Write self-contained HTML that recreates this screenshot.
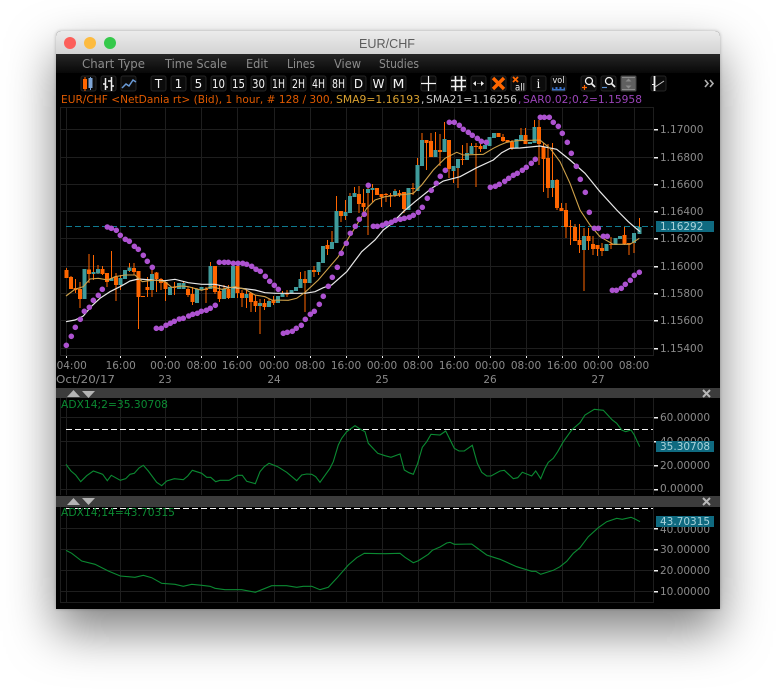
<!DOCTYPE html>
<html><head><meta charset="utf-8"><title>EUR/CHF</title>
<style>
html,body{margin:0;padding:0;background:#fff;width:776px;height:689px;overflow:hidden}
#w{position:absolute;left:56px;top:31px;width:664px;height:578px;border-radius:5px 5px 0 0;box-shadow:0 22px 48px rgba(0,0,0,.5),0 0 3px rgba(0,0,0,.25);background:#000}
svg{position:absolute;left:0;top:0}
text{font-family:"DejaVu Sans","Liberation Sans",sans-serif;font-size:10.5px;fill:#8a8a8a}
.b{fill:#0b0b0b;stroke:#242424;stroke-width:1}
.t{fill:#f4f4f4;font-size:12px;text-anchor:middle}
</style></head><body>
<div id="w"></div>
<svg width="776" height="689" viewBox="0 0 776 689">
<defs>
<linearGradient id="tb" x1="0" y1="0" x2="0" y2="1"><stop offset="0" stop-color="#ececec"/><stop offset="1" stop-color="#d3d3d3"/></linearGradient>
<linearGradient id="mb" x1="0" y1="0" x2="0" y2="1"><stop offset="0" stop-color="#262626"/><stop offset="1" stop-color="#080808"/></linearGradient>
</defs>
<path d="M56 54V36a5 5 0 0 1 5-5H715a5 5 0 0 1 5 5V54z" fill="url(#tb)"/>
<circle cx="70" cy="43" r="6" fill="#fc5f5a"/><circle cx="90" cy="43" r="6" fill="#fdbb3f"/><circle cx="110" cy="43" r="6" fill="#35c94b"/>
<text x="359" y="48" textLength="56" lengthAdjust="spacingAndGlyphs" style="font-family:'Liberation Sans',sans-serif;font-size:13px;fill:#5c5c5c">EUR/CHF</text>
<rect x="56" y="54" width="664" height="19" fill="url(#mb)"/>
<g style="fill:#8b8b8b">
<text x="82" y="68" textLength="63" lengthAdjust="spacingAndGlyphs" style="font-size:12px;fill:#8b8b8b">Chart Type</text>
<text x="165" y="68" textLength="62" lengthAdjust="spacingAndGlyphs" style="font-size:12px;fill:#8b8b8b">Time Scale</text>
<text x="246" y="68" textLength="22" lengthAdjust="spacingAndGlyphs" style="font-size:12px;fill:#8b8b8b">Edit</text>
<text x="287" y="68" textLength="28" lengthAdjust="spacingAndGlyphs" style="font-size:12px;fill:#8b8b8b">Lines</text>
<text x="334" y="68" textLength="27" lengthAdjust="spacingAndGlyphs" style="font-size:12px;fill:#8b8b8b">View</text>
<text x="379" y="68" textLength="40" lengthAdjust="spacingAndGlyphs" style="font-size:12px;fill:#8b8b8b">Studies</text>
</g>

<!-- toolbar -->
<g>
<rect class="b" x="81" y="76" width="15" height="15" rx="2"/><rect class="b" x="101" y="76" width="15" height="15" rx="2"/><rect class="b" x="121" y="76" width="15" height="15" rx="2"/>
<rect class="b" x="151" y="76" width="15" height="15" rx="2"/><rect class="b" x="171" y="76" width="15" height="15" rx="2"/><rect class="b" x="191" y="76" width="15" height="15" rx="2"/><rect class="b" x="211" y="76" width="15" height="15" rx="2"/><rect class="b" x="231" y="76" width="15" height="15" rx="2"/><rect class="b" x="251" y="76" width="15" height="15" rx="2"/><rect class="b" x="271" y="76" width="15" height="15" rx="2"/><rect class="b" x="291" y="76" width="15" height="15" rx="2"/><rect class="b" x="311" y="76" width="15" height="15" rx="2"/><rect class="b" x="331" y="76" width="15" height="15" rx="2"/><rect class="b" x="351" y="76" width="15" height="15" rx="2"/><rect class="b" x="371" y="76" width="15" height="15" rx="2"/><rect class="b" x="391" y="76" width="15" height="15" rx="2"/>
<rect class="b" x="421" y="76" width="15" height="15" rx="2"/><rect class="b" x="451" y="76" width="15" height="15" rx="2"/><rect class="b" x="471" y="76" width="15" height="15" rx="2"/><rect class="b" x="491" y="76" width="15" height="15" rx="2"/><rect class="b" x="511" y="76" width="15" height="15" rx="2"/><rect class="b" x="531" y="76" width="15" height="15" rx="2"/><rect class="b" x="551" y="76" width="15" height="15" rx="2"/><rect class="b" x="581" y="76" width="15" height="15" rx="2"/><rect class="b" x="601" y="76" width="15" height="15" rx="2"/><rect x="621" y="76" width="15" height="15" rx="1" fill="#5f5f5f" stroke="#444"/><rect class="b" x="651" y="76" width="15" height="15" rx="2"/>
<path d="M85 77V91" stroke="#ff6600"/><rect x="83" y="79" width="4" height="10" fill="#ff6600"/>
<path d="M90.5 77V90" stroke="#7fa6d6"/><rect x="88.5" y="78" width="4" height="10" fill="#7fa6d6"/>
<path d="M105.5 78V90M111.5 77V91M103 84h2.5M108 81h3.5M105.5 87h2.5M111.5 86h2.5" stroke="#f0f0f0" stroke-width="1.5" fill="none"/>
<path d="M122 88l4-4 3 2 4-6 3 2" stroke="#6a9ad6" stroke-width="1.5" fill="none"/>
<text class="t" x="158.5" y="88">T</text><text class="t" x="178.5" y="88">1</text><text class="t" x="198.5" y="88">5</text>
<text class="t" x="218.5" y="88" textLength="13" lengthAdjust="spacingAndGlyphs">10</text><text class="t" x="238.5" y="88" textLength="13" lengthAdjust="spacingAndGlyphs">15</text><text class="t" x="258.5" y="88" textLength="13" lengthAdjust="spacingAndGlyphs">30</text>
<text class="t" x="278.5" y="88" textLength="13" lengthAdjust="spacingAndGlyphs">1H</text><text class="t" x="298.5" y="88" textLength="13" lengthAdjust="spacingAndGlyphs">2H</text><text class="t" x="318.5" y="88" textLength="13" lengthAdjust="spacingAndGlyphs">4H</text><text class="t" x="338.5" y="88" textLength="13" lengthAdjust="spacingAndGlyphs">8H</text>
<text class="t" x="358.5" y="88">D</text><text class="t" x="378.5" y="88" textLength="12" lengthAdjust="spacingAndGlyphs">W</text><text class="t" x="398.5" y="88" textLength="12" lengthAdjust="spacingAndGlyphs">M</text>
<path d="M428.5 76V91M421 83.5H436" stroke="#f4f4f4" stroke-width="1.2"/>
<path d="M455.5 76V91M461.5 76V91M451 80.5H466M451 86.5H466" stroke="#f4f4f4" stroke-width="1.6"/>
<path d="M473 83.5l3-2.5v5zM484 83.5l-3-2.5v5z" fill="#eee"/><path d="M477.5 83.5h1M479.5 83.5h1" stroke="#ccc"/>
<path d="M493 78l11 11M504 78l-11 11" stroke="#ff6600" stroke-width="3.4"/>
<path d="M513 77l5 5M518 77l-5 5" stroke="#ff6600" stroke-width="1.8"/>
<text x="515" y="90.5" textLength="10" lengthAdjust="spacingAndGlyphs" style="font-size:10px;fill:#f4f4f4">all</text>
<text class="t" x="538.5" y="88" style="font-family:'Liberation Serif',serif;font-size:14px">i</text>
<text x="552.5" y="83" textLength="12" lengthAdjust="spacingAndGlyphs" style="font-size:9px;fill:#f0f0f0">vol</text>
<path d="M552 90.5h13v-3h-1.5v1.5h-2v-2h-2v2h-2v-2h-2v2h-2v-1.5H552z" fill="#3a72c8"/>
<circle cx="589" cy="81" r="3.5" fill="none" stroke="#eee" stroke-width="1.3"/><path d="M591.5 83.5l3.5 3.5" stroke="#eee" stroke-width="1.8"/><path d="M582 87.5h5M584.5 85v5" stroke="#ff6600" stroke-width="1.2"/>
<circle cx="609" cy="81" r="3.5" fill="none" stroke="#eee" stroke-width="1.3"/><path d="M611.5 83.5l3.5 3.5" stroke="#eee" stroke-width="1.8"/><path d="M602 87.5h5" stroke="#5a8ed0" stroke-width="1.2"/>
<path d="M628.5 78.5l-3 3h6zM628.5 88.5l-3-3h6z" fill="#8a8a8a"/><path d="M622 77.5h13M622 89.5h13" stroke="#8a8a8a"/>
<path d="M654.5 76V91" stroke="#f4f4f4" stroke-width="1.8"/><path d="M655 87l9-6" stroke="#c8c8c8"/><path d="M652 84.5h2" stroke="#eee"/>
<path d="M705 80l3 3.5-3 3.5M710 80l3 3.5-3 3.5" stroke="#b0b0b0" stroke-width="1.6" fill="none"/>
</g>

<!-- header text -->
<text x="61" y="103" textLength="272" lengthAdjust="spacingAndGlyphs" style="fill:#e05a00">EUR/CHF &lt;NetDania rt&gt; (Bid), 1 hour, # 128 / 300,</text>
<text x="336" y="103" textLength="84" lengthAdjust="spacingAndGlyphs" style="fill:#d8a030">SMA9=1.16193</text>
<text x="421" y="103" style="fill:#d0d0d0">,</text>
<text x="426" y="103" textLength="91" lengthAdjust="spacingAndGlyphs" style="fill:#c8c8c8">SMA21=1.16256</text>
<text x="518" y="103" style="fill:#9a44b8">,</text>
<text x="523" y="103" textLength="119" lengthAdjust="spacingAndGlyphs" style="fill:#9a44b8">SAR0.02;0.2=1.15958</text>

<!-- grids -->
<g stroke="#1e1e1e" shape-rendering="crispEdges" fill="none">
<path d="M60.5 107V355M66.5 107V355M120.5 107V355M165.5 107V355M201.5 107V355M237.5 107V355M274.5 107V355M310.5 107V355M346.5 107V355M382.5 107V355M418.5 107V355M454.5 107V355M490.5 107V355M526.5 107V355M562.5 107V355M598.5 107V355M634.5 107V355M653.5 107V355"/>
<path d="M60 107.5H654M60 129.5H654M60 157.5H654M60 184.5H654M60 211.5H654M60 238.5H654M60 266.5H654M60 293.5H654M60 320.5H654M60 348.5H654M60 355.5H654"/>
<path d="M60.5 398V495M66.5 398V495M120.5 398V495M165.5 398V495M201.5 398V495M237.5 398V495M274.5 398V495M310.5 398V495M346.5 398V495M382.5 398V495M418.5 398V495M454.5 398V495M490.5 398V495M526.5 398V495M562.5 398V495M598.5 398V495M634.5 398V495M653.5 398V495"/>
<path d="M60 417.5H654M60 441.5H654M60 465.5H654M60 489.5H654"/>
<path d="M60.5 507V603M66.5 507V603M120.5 507V603M165.5 507V603M201.5 507V603M237.5 507V603M274.5 507V603M310.5 507V603M346.5 507V603M382.5 507V603M418.5 507V603M454.5 507V603M490.5 507V603M526.5 507V603M562.5 507V603M598.5 507V603M634.5 507V603M653.5 507V603"/>
<path d="M60 528.5H654M60 549.5H654M60 570.5H654M60 591.5H654M60 602.5H654"/>
</g>

<path d="M66 226.5H653" stroke="#0f7a90" stroke-dasharray="6 3" shape-rendering="crispEdges"/>

<!-- candles -->
<path shape-rendering="crispEdges" fill="none" stroke="#ff6600" d="M66.5 268V278M71 276V289M75.5 279V293M80 282V308M89 254V283M93.5 255V280M98 265V274M102.5 266V275M107 273V287M111.5 251V279M116 273V301M120.5 275V290M129.5 263V272M134 263V275M138.5 271V329M147.5 277V297M152 270V297M156.5 272V292M161 278V290M165.5 282V301M174.5 282V295M183.5 282V289M188 287V297M192.5 287V305M197 288V303M206 287V303M210.5 262V289M215 266V294M219.5 285V302M224 285V299M228.5 285V299M237.5 266V298M242 290V307M246.5 290V308M251 293V312M255.5 295V312M260 299V334M264.5 299V310M269 299V307M273.5 296V305M282.5 291V297M287 290V297M300.5 272V288M305 271V312M314 266V277M318.5 262V275M327.5 240V255M332 231V249M336.5 196V243M341 211V222M345.5 200V220M350 193V213M354.5 187V197M359 186V213M363.5 189V217M368 183V235M372.5 184V202M377 188V195M381.5 194V207M386 193V202M390.5 193V207M395 189V197M399.5 190V197M404 192V213M413 183V195M417.5 158V191M422 133V166M426.5 140V170M431 133V157M435.5 132V157M440 134V166M444.5 122V152M449 140V178M453.5 166V183M458 159V188M462.5 145V165M467 143V160M471.5 143V154M476 143V187M480.5 141V152M498.5 133V137M503 134V142M512 140V150M521 128V140M525.5 128V144M534.5 120V143M539 120V165M543.5 143V192M548 144V198M552.5 143V197M557 179V210M561.5 203V211M566 203V238M570.5 220V245M575 224V241M579.5 224V253M584 228V291M588.5 228V250M593 236V255M597.5 245V256M602 243V256M611 237V249M624.5 227V245M629 243V255M634 233V253M639.5 218V234"/>
<path shape-rendering="crispEdges" fill="none" stroke="#ff6600" stroke-width="4" d="M66.5 270V278M71 277V289M75.5 288V290M80 289V299M89 269.5V274M102.5 269V274M107 273V282M116 277V285M134 268V272M138.5 271V297M143 296V297M147.5 287V290M156.5 272.5V279M161 279V283M165.5 282V289M174.5 287V288M188 289V295M192.5 294V302M206 289V290M215 266V292M219.5 291V299M228.5 289V298M237.5 266V293M242 293V298M251 293V302M255.5 301V306M264.5 303V307M273.5 300V303M287 293.5V294.5M305 279V283M314 270V272M327.5 245V249M341 211V216M359 194V204M363.5 203V207M377 188V195M381.5 194V197M386 194V195M390.5 195V196M399.5 193V195M404 192V209M413 188V189M426.5 140V143M431 141V157M440 150V152M449 140V169M462.5 159V160M476 146V147M480.5 146V149M498.5 133V137M503 137V141M507.5 140V142M512 142V148M525.5 135V144M539 127V144M543.5 147V159M548 158V188M557 180V208M561.5 208V211M566 210V227M570.5 226V227M575 227V241M579.5 240V245M588.5 236V241M593 244V249M597.5 245V249M602 248V251M611 244V245M624.5 235V244M629 243V244"/>
<path shape-rendering="crispEdges" fill="none" stroke="#3f9b9b" stroke-width="4" d="M84.5 269V299M93.5 272V274M98 269V273.5M111.5 278V281M120.5 278V285M125 270V279M129.5 267.5V271M152 274V290M170 287V295M179 283V289M183.5 283V289M197 289V303M201.5 287V290M210.5 266V289M224 289V299M233 266V298M246.5 294V298M260 303V306M269 301V307M278 296V303M282.5 293V297M291.5 290V293M296 287V291M300.5 279V288M309.5 270V283M318.5 262V272M323 246V263M332 242V249M336.5 211V243M345.5 212V216M350 196V213M354.5 193V197M368 189V193M372.5 188V190M395 191V195M408.5 188V210M417.5 165V191M422 140V166M435.5 150V157M444.5 139V152M453.5 166V171M458 159V168M467 153V160M471.5 146V154M485 145V149M489.5 137V146M494 133V138M516.5 139V148M521 135V140M530 142V144M534.5 127V143M552.5 180V188M584 236V250M606.5 244V251M615.5 238V245M620 236V239M634 233V243M639.5 227V234"/>

<!-- SMA lines -->
<polyline fill="none" stroke="#e8e8e8" stroke-width="1.2" points="66,321.7 75,320 83.3,316 91.7,306 100,298.3 110,291.7 120,286.7 130,281 138.3,279 151.7,280 165,280.7 175,279.3 188.3,282.7 201.7,284.3 215,284.3 228.3,287.3 241.7,288.3 255,290 265,292.7 275,293.3 305,293.3 315,291.7 323.3,287.7 331.7,285 346.7,271.7 361.7,251.7 375,240 383.3,230 390,225 403.3,211.7 415,201.7 431.7,188.3 443.3,181 460,176.7 476.7,167.7 493.3,160 501.7,152.7 510,148.3 520,148 540,146 556.7,149.3 570,160 585,173.3 600,191.7 616.7,210 628.3,221.7 640,231.7"/>
<polyline fill="none" stroke="#cfa24a" stroke-width="1.1" points="66,296 75,289.3 83.3,286.7 90,279 98.3,278.3 108.3,280 115,276.7 125,275 135,275 142.3,281.7 155,280 165,281.7 171.7,287.3 181.7,286 188.3,286.7 201.7,290.3 211.7,286.7 221.7,289.3 235,286.7 245,289.3 255,295 265,296.7 271.7,300 288.3,300.3 296.7,298.3 305,292.3 318.3,280 328.3,268.3 338.3,256.7 348.3,238.3 356.7,225 366.7,208.3 375,200 385,196.7 400,195 413.3,193.3 421.7,185 433.3,170 445,158.3 456.7,152.3 463.3,155 483.3,154.3 493.3,148.3 500,145 506.7,142.3 516.7,140.7 540,140 550,148.3 560,161.7 570,183.3 580,210 590,225 600,236.7 613.3,244.3 630,244.3 639.3,238.3"/>

<!-- SAR dots -->
<path fill="none" stroke="#ad52d0" stroke-width="5.6" stroke-linecap="round" d="M66.3 345.3h.01M71.3 336.3h.01M75.3 327.3h.01M80.3 319.3h.01M84.3 311.3h.01M89.3 307.3h.01M93.3 300.3h.01M98.3 295.3h.01M102.3 289.3h.01M107.3 227h.01M111.3 228.3h.01M116.3 230.3h.01M120.3 235.3h.01M125.3 239.3h.01M129.3 241.3h.01M134.3 246.3h.01M138.3 249.3h.01M143.3 255.3h.01M147.3 261.3h.01M152.3 267.3h.01M156.3 328.3h.01M161.3 328.3h.01M166 325.3h.01M170.3 323.3h.01M174.3 321.3h.01M179.3 319h.01M183.3 318.3h.01M188.7 316h.01M192.7 314.3h.01M197.3 313.3h.01M201.3 311.3h.01M206.3 310.3h.01M210.3 308.3h.01M215.3 305.3h.01M219.3 262.3h.01M224.3 262.3h.01M228.3 262.3h.01M233.3 263.3h.01M238 263.3h.01M242.7 263.3h.01M246.7 264.3h.01M251.7 266.3h.01M256 269.3h.01M260.3 271.3h.01M265.3 276.3h.01M269.7 281.3h.01M274.3 285.3h.01M278.3 289.3h.01M283.3 333.3h.01M287.3 332.3h.01M292.3 331.3h.01M296.3 328.3h.01M301.3 325.3h.01M305.3 319.3h.01M310.3 314.3h.01M314.3 311.3h.01M319.3 304.3h.01M323.3 296.3h.01M328.3 286.3h.01M332.3 277.3h.01M337.3 267.3h.01M341.3 253.3h.01M346.3 243.3h.01M350.3 233.3h.01M355.3 226.3h.01M359.3 219.3h.01M364.3 214.3h.01M368.3 185.3h.01M373.3 226.3h.01M377.3 226.3h.01M382.3 225.3h.01M386.3 223.3h.01M391.3 222.3h.01M395.3 220.3h.01M400.3 219.3h.01M404.3 218.3h.01M409.3 217.3h.01M413.3 215.3h.01M418.3 212.3h.01M422.3 207.3h.01M427.3 198.3h.01M431.3 190.3h.01M436.3 183.3h.01M440.3 176.3h.01M445.3 170.3h.01M449.3 122.3h.01M454.3 122.3h.01M459.3 125.3h.01M463.3 129.3h.01M468.3 132.3h.01M472.3 135.3h.01M477.3 138.3h.01M481.3 141.3h.01M486.3 142.3h.01M490.3 187.3h.01M495.3 186.3h.01M499.3 184.3h.01M504.7 181.3h.01M508.7 178.3h.01M513.3 175.3h.01M517.3 173.3h.01M522.3 170.3h.01M526.3 167.3h.01M531.3 163.3h.01M535.3 159.3h.01M540.3 117.3h.01M544.3 117.3h.01M549.3 117.3h.01M553.3 122.3h.01M558.3 126.3h.01M562.3 133.3h.01M567.3 142.3h.01M571.3 153.3h.01M576.3 166.3h.01M580.3 179.3h.01M585.3 192.3h.01M589.3 212.3h.01M594.3 228.3h.01M598.3 228.3h.01M603.3 236.3h.01M607.3 236.3h.01M612.3 290.3h.01M616.3 290.3h.01M621.3 288.3h.01M625.3 284.3h.01M630.3 280.3h.01M634.3 275.3h.01M639.3 272.3h.01"/>

<!-- time axis -->
<path stroke="#f0f0f0" stroke-width="1" shape-rendering="crispEdges" d="M66.5 356v2M120.5 356v2M165.5 356v2M201.5 356v2M237.5 356v2M274.5 356v2M310.5 356v2M346.5 356v2M382.5 356v2M418.5 356v2M454.5 356v2M490.5 356v2M526.5 356v2M562.5 356v2M598.5 356v2M634.5 356v2"/>
<g text-anchor="middle">
<text x="71.7" y="369">04:00</text><text x="120.7" y="369">16:00</text><text x="165.3" y="369">00:00</text><text x="201.7" y="369">08:00</text><text x="237" y="369">16:00</text><text x="274" y="369">00:00</text><text x="310" y="369">08:00</text><text x="346" y="369">16:00</text><text x="382" y="369">00:00</text><text x="418" y="369">08:00</text><text x="454" y="369">16:00</text><text x="490" y="369">00:00</text><text x="526" y="369">08:00</text><text x="562" y="369">16:00</text><text x="598" y="369">00:00</text><text x="634" y="369">08:00</text>
<text x="165" y="383">23</text><text x="274" y="383">24</text><text x="382" y="383">25</text><text x="490" y="383">26</text><text x="598" y="383">27</text>
</g>
<text x="56" y="383" textLength="59" lengthAdjust="spacingAndGlyphs">Oct/20/17</text>

<!-- price axis -->
<path stroke="#f0f0f0" stroke-width="1.5" shape-rendering="crispEdges" d="M654 129.5h4M654 157.5h4M654 184.5h4M654 211.5h4M654 238.5h4M654 266.5h4M654 293.5h4M654 320.5h4M654 348.5h4M654 417.5h4M654 441.5h4M654 465.5h4M654 489.5h4M654 528.5h4M654 549.5h4M654 570.5h4M654 591.5h4"/>
<text x="660" y="133">1.17000</text><text x="660" y="161">1.16800</text><text x="660" y="188">1.16600</text><text x="660" y="215">1.16400</text><text x="660" y="242">1.16200</text><text x="660" y="270">1.16000</text><text x="660" y="297">1.15800</text><text x="660" y="324">1.15600</text><text x="660" y="352">1.15400</text>
<rect x="656" y="221" width="58" height="11" fill="#0f6a80"/>
<text x="660" y="230" style="fill:#a9d2da">1.16292</text>

<!-- separators/panels -->
<rect x="56" y="388" width="664" height="10" fill="#3c3c3c"/>
<rect x="56" y="496" width="664" height="11" fill="#3c3c3c"/>
<path d="M67 397l6.5-7 6.5 7zM82 391h13l-6.5 7z" fill="#b4b4b4"/>
<path d="M67 505l6.5-7 6.5 7zM82 498h13l-6.5 7z" fill="#b4b4b4"/>
<path d="M703 390l7 7M710 390l-7 7M703 498l7 7M710 498l-7 7" stroke="#b8b8b8" stroke-width="2"/>

<path d="M66 429.5H653M66 508.5H653" stroke="#f4f4f4" stroke-width="1.2" stroke-dasharray="6 3" shape-rendering="crispEdges"/>

<!-- ADX 1 -->
<polyline fill="none" stroke="#0b8a32" stroke-width="1.1" points="66,464.3 71,471 75.7,475 80.7,481.7 86.7,475.7 93.3,471 100,473.3 102.7,474.3 107.3,480.7 111.3,475.3 120.3,480.3 125.7,478.7 130,474.3 134.3,473.3 139,468 143.3,465.3 148.3,471 156.7,482.3 161.7,485.7 166.7,481 174.3,478.7 183.3,479.7 187.7,476 192.3,470.3 201.7,473.3 206.7,477.3 210.7,477.3 215.7,481.7 220,480.3 229,480.3 237.7,475.3 242.3,475.3 246.7,481.3 255.3,483.7 260,471.7 264.3,466.7 269,463.3 277.7,466.7 286.7,472.3 296.7,480.7 301.7,475 306.7,474 311.7,474.3 315.7,476.7 320,482.3 330,468.3 333.3,461.7 338.3,445 341.7,438.3 346.7,431.7 355,425.7 360,429 365,431.7 368.3,443.3 377.7,453.3 385,455.7 391,457.3 400,454 404.3,470 409,472.7 413.3,474.3 417.7,463.3 422.3,447.3 426.7,441.7 431,434.3 440,435 445.7,431 454.3,448.3 459,451 464.3,451 472.3,445.3 477.3,463.3 481.7,472.3 486.7,476 491,476 500,471 504.3,470.3 513.3,478.7 517.7,477.7 522.3,472.3 531.7,476 535.7,471 540.7,478.7 545,468.3 548.3,462.3 553.3,458.3 557.7,451.7 563.3,441.7 571.7,430 580,422.7 585,415 594.3,409.3 603.3,410.3 607.7,415 612.3,420 616.7,423.3 621.7,430 625.7,431.7 631,430 634.3,435 639.7,446.7"/>
<text x="61" y="408" textLength="107" lengthAdjust="spacingAndGlyphs" style="fill:#0b8a32">ADX14;2=35.30708</text>
<text x="660" y="421">60.00000</text><text x="660" y="445">40.00000</text><text x="660" y="469">20.00000</text><text x="660" y="492">0.00000</text>
<rect x="656" y="441" width="58" height="11" fill="#0f6a80"/>
<text x="660" y="450" style="fill:#a9d2da">35.30708</text>

<!-- ADX 2 -->
<polyline fill="none" stroke="#0b8a32" stroke-width="1.1" points="66,550.3 71.7,553.3 81.7,561 95,564.3 108.3,571 120.3,576 135,577.3 143.3,575.3 151.7,577.7 161.7,583.3 175,584.3 183.3,586.3 191.7,584.3 201.7,585.3 210,586.3 215,588.3 225,589.7 241.7,589.7 255.3,592.3 271.7,585.7 286.7,585.7 296.7,587.3 303.3,586.3 311.7,586.3 320,589.7 328.3,587.3 336.7,578.3 348.3,565 356.7,557.7 364.3,553.3 385,553.7 400,553.3 405,557.3 413.3,562.7 418.3,560.7 428.3,554.3 432.3,550.3 440,547 446.7,543 450,542.3 454.3,544.3 471.7,544 486.7,555 491.7,556.7 500,559.3 516.7,566.7 531.7,571.3 535.7,571.3 540.7,574.3 553.3,570.3 560,566.7 566.7,561.3 573.3,553.3 580,547.7 588.3,536.7 598.3,527.7 606.7,521.7 616.7,518.3 622.3,519.3 631,517.3 635,519 640,521.7"/>
<text x="61" y="516" textLength="114" lengthAdjust="spacingAndGlyphs" style="fill:#0b8a32">ADX14;14=43.70315</text>
<text x="660" y="533">40.00000</text><text x="660" y="553">30.00000</text><text x="660" y="574">20.00000</text><text x="660" y="595">10.00000</text>
<rect x="656" y="516" width="58" height="11" fill="#0f6a80"/>
<text x="660" y="525" style="fill:#a9d2da">43.70315</text>
</svg>
</body></html>
